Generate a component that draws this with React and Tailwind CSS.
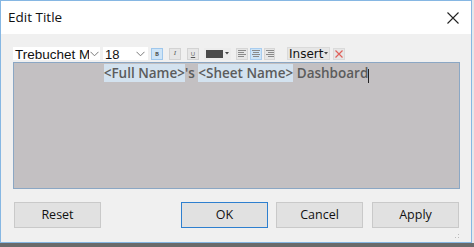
import React from "react";

const Chevron = ({ className = "" }) => (
  <svg width="9" height="6" viewBox="0 0 9 6" className={className}>
    <path d="M0.5 0.8 L4.5 4.8 L8.5 0.8" fill="none" stroke="#7a7a7a" strokeWidth="1" />
  </svg>
);

const AlignIcon = ({ mode }) => {
  const lines = [8, 6, 8, 6];
  return (
    <svg width="8" height="7" viewBox="0 0 8 7">
      {lines.map((w, i) => {
        let x = 0;
        if (mode === "center") x = (8 - w) / 2;
        if (mode === "right") x = 8 - w;
        return <rect key={i} x={x} y={i * 2} width={w} height="1" fill="#8a8a8a" />;
      })}
    </svg>
  );
};

export default function App() {
  return (
    <div className="w-[474px] h-[247px] bg-[#e9eaec] flex flex-col overflow-hidden" style={{ fontFamily: "'Open Sans', sans-serif" }}>
      <div className="flex">
        <div className="w-[472px] h-[243px] border border-[#86b7e3] bg-[#f0f0f0] flex flex-col">
          {/* title bar */}
          <div className="h-[33px] bg-white flex items-center pl-[7px] pr-[12px]">
            <span className="text-[13.5px] text-[#111] leading-none">Edit Title</span>
            <svg className="ml-auto" width="12" height="12" viewBox="0 0 12 12">
              <path d="M0.5 0.5 L11.5 11.5 M11.5 0.5 L0.5 11.5" stroke="#222" strokeWidth="1.1" />
            </svg>
          </div>

          <div className="flex flex-col pl-[12px] pr-[11px] pt-[13px]">
            {/* toolbar */}
            <div className="h-[13px] flex items-center">
              <div className="w-[87px] h-[13px] bg-white flex items-center overflow-hidden relative">
                <span className="text-[13.5px] leading-none text-[#111] whitespace-nowrap pl-[2px] mt-[3px]" style={{ fontFamily: "'Liberation Sans', sans-serif" }}>Trebuchet MS</span>
                <div className="absolute right-0 top-0 h-[13px] w-[11px] bg-white flex items-center justify-center">
                  <Chevron />
                </div>
              </div>
              <div className="ml-[3px] w-[45px] h-[13px] bg-white flex items-center relative">
                <span className="text-[13px] leading-none text-[#111] pl-[2px] mt-[2px]" style={{ fontFamily: "'Liberation Sans', sans-serif" }}>18</span>
                <div className="absolute right-[3px] top-0 h-[13px] flex items-center">
                  <Chevron />
                </div>
              </div>
              <div className="ml-[3px] w-[12px] h-[12px] bg-[#cde4f7] border border-[#9fc7ec] flex items-center justify-center">
                <span className="text-[6px] font-bold text-[#555] leading-none">B</span>
              </div>
              <div className="ml-[6px] w-[12px] h-[12px] bg-[#e6e6e6] border border-[#d3d3d3] flex items-center justify-center">
                <span className="text-[7px] italic text-[#555] leading-none" style={{ fontFamily: "'Liberation Serif', serif" }}>I</span>
              </div>
              <div className="ml-[6px] w-[12px] h-[12px] bg-[#e6e6e6] border border-[#d3d3d3] flex items-center justify-center">
                <span className="text-[6px] underline text-[#555] leading-none">U</span>
              </div>
              <div className="ml-[5px] h-[12px] flex items-center pl-[2px] pr-[2px] bg-[#ececec]">
                <div className="w-[17px] h-[8px] bg-[#4b4b4b]" />
                <svg className="ml-[2px]" width="4" height="3" viewBox="0 0 4 3">
                  <path d="M0 0 L4 0 L2 2.5 Z" fill="#444" />
                </svg>
              </div>
              <div className="ml-[5px] w-[12px] h-[12px] bg-[#e6e6e6] border border-[#d6d6d6] flex items-center justify-center">
                <AlignIcon mode="left" />
              </div>
              <div className="ml-[2px] w-[12px] h-[12px] bg-[#cde4f7] border border-[#a9cdef] flex items-center justify-center">
                <AlignIcon mode="center" />
              </div>
              <div className="ml-[2px] w-[11px] h-[12px] bg-[#e6e6e6] border border-[#d6d6d6] flex items-center justify-center">
                <AlignIcon mode="right" />
              </div>
              <div className="ml-[12px] h-[13px] w-[43px] bg-[#e6e6e6] border border-[#dadada] flex items-center pl-[1px]">
                <span className="leading-none text-[#111]" style={{ fontFamily: "'DejaVu Sans', sans-serif", fontSize: "12px" }}>Insert</span>
                <svg className="ml-[1px]" width="4" height="3" viewBox="0 0 4 3">
                  <path d="M0 0 L4 0 L2 2.5 Z" fill="#444" />
                </svg>
              </div>
              <div className="ml-[3px] w-[12px] h-[12px] bg-[#e6e6e6] border border-[#dadada] flex items-center justify-center">
                <svg width="8" height="8" viewBox="0 0 8 8">
                  <path d="M0.5 0.5 L7.5 7.5 M7.5 0.5 L0.5 7.5" stroke="#e0605a" strokeWidth="1.2" />
                </svg>
              </div>
            </div>

            {/* edit area */}
            <div className="mt-[2px] h-[127px] border border-[#8ba7c4] bg-[#c3c0c2] flex justify-center pt-[1px]">
              <div className="flex items-start text-[13.5px] font-semibold text-[#5c5c5c] leading-[18px] whitespace-pre">
                <span className="bg-[#d3e2ef]">{"<Full Name>"}</span>
                <span>{"'s "}</span>
                <span className="bg-[#d3e2ef]">{"<Sheet Name>"}</span>
                <span>{" Dashboard"}</span>
                <span className="w-[1px] h-[14px] bg-[#222] mt-[5px]" />
              </div>
            </div>

            {/* buttons */}
            <div className="mt-[13px] flex pl-[1px] pr-[1px] text-[12.5px] text-[#111]">
              <button className="w-[87px] h-[26px] bg-[#e1e1e1] border border-[#c9c9c9]">Reset</button>
              <button className="ml-auto w-[87px] h-[26px] bg-[#e1e1e1] border border-[#2e7fcf]">OK</button>
              <button className="ml-[8px] w-[87px] h-[26px] bg-[#e1e1e1] border border-[#c9c9c9]">Cancel</button>
              <button className="ml-[9px] w-[87px] h-[26px] bg-[#e1e1e1] border border-[#c9c9c9]">Apply</button>
            </div>
            <div className="flex justify-end mt-[6px]">
              <svg width="5" height="5" viewBox="0 0 5 5">
                <rect x="3" y="0" width="1" height="1" fill="#bbb" />
                <rect x="3" y="3" width="1" height="1" fill="#bbb" />
                <rect x="0" y="3" width="1" height="1" fill="#bbb" />
              </svg>
            </div>
          </div>
        </div>
        <div className="flex-1 bg-[#e6e8ea]" />
      </div>
      <div className="flex-1 bg-[#6a6a6a]" />
    </div>
  );
}
